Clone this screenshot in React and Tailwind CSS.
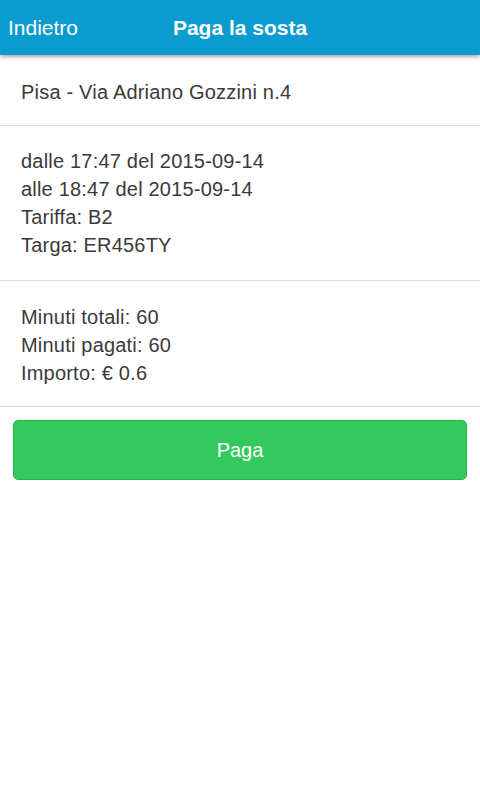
export default function App() {
  return (
    <div className="min-h-[800px] bg-white font-['Liberation_Sans',Arial,sans-serif] text-[#3a3a3a]">
      <header className="relative z-10 h-[55px] bg-[#0b9bce] flex items-center shadow-[0_2px_4px_rgba(0,0,0,0.35)]">
        <span className="absolute left-[8px] text-white text-[21px]">Indietro</span>
        <h1 className="w-full text-center text-white text-[21px] font-bold">Paga la sosta</h1>
      </header>

      <div className="px-[21px] pt-[23px] pb-[19px] border-b border-[#dcdcdc] text-[20px] leading-[28px] tracking-[0.2px]">
        Pisa - Via Adriano Gozzini n.4
      </div>

      <div className="px-[21px] py-[21px] border-b border-[#dcdcdc] text-[20px] leading-[28px] tracking-[0.2px]">
        <p>dalle 17:47 del 2015-09-14</p>
        <p>alle 18:47 del 2015-09-14</p>
        <p>Tariffa: B2</p>
        <p>Targa: ER456TY</p>
      </div>

      <div className="px-[21px] pt-[22px] pb-[19px] border-b border-[#dcdcdc] text-[20px] leading-[28px] tracking-[0.2px]">
        <p>Minuti totali: 60</p>
        <p>Minuti pagati: 60</p>
        <p>Importo: € 0.6</p>
      </div>

      <div className="px-[13px] pt-[13px]">
        <button className="w-full h-[60px] rounded-[5px] bg-[#34c95c] border border-[#2db54f] text-white text-[20px]">
          Paga
        </button>
      </div>
    </div>
  )
}
